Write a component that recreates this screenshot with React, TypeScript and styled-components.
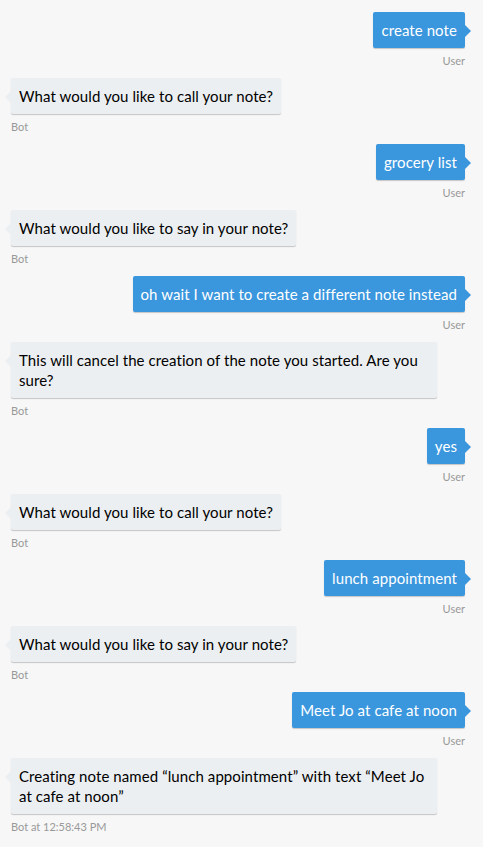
import React from "react";
import styled, { createGlobalStyle } from "styled-components";

const GlobalStyle = createGlobalStyle`
  html, body {
    margin: 0;
    padding: 0;
    background: #f7f7f7;
  }
  body {
    font-family: Lato, "Open Sans", "Liberation Sans", sans-serif;
    -webkit-font-smoothing: antialiased;
  }
`;

type From = "user" | "bot";

const Chat = styled.div`
  display: flex;
  flex-direction: column;
  padding: 12px 18px 0 11px;
  min-height: 847px;
  box-sizing: border-box;
  background: #f7f7f7;
`;

const MessageGroup = styled.div<{ $from: From }>`
  display: flex;
  flex-direction: column;
  align-items: ${(p) => (p.$from === "user" ? "flex-end" : "flex-start")};
  margin-bottom: 9px;
`;

const Bubble = styled.div<{ $from: From }>`
  position: relative;
  max-width: 410px;
  padding: 8px;
  border-radius: 2px;
  font-size: 15px;
  line-height: 20px;
  letter-spacing: 0.08px;
  background: ${(p) => (p.$from === "user" ? "#3a96dd" : "#eceff1")};
  color: ${(p) => (p.$from === "user" ? "#ffffff" : "#000000")};
  box-shadow: 0 1px 1px 0 rgba(0, 0, 0, 0.2);
`;

const Callout = styled.svg<{ $from: From }>`
  position: absolute;
  top: 13px;
  width: 6px;
  height: 12px;
  ${(p) => (p.$from === "user" ? "right: -6px;" : "left: -6px;")}
  fill: ${(p) => (p.$from === "user" ? "#3a96dd" : "#eceff1")};
`;

const FromLabel = styled.div`
  margin-top: 5px;
  font-size: 11px;
  line-height: 16px;
  color: #999999;
`;

type Msg = { from: From; text: string; label?: string };

const messages: Msg[] = [
  { from: "user", text: "create note" },
  { from: "bot", text: "What would you like to call your note?" },
  { from: "user", text: "grocery list" },
  { from: "bot", text: "What would you like to say in your note?" },
  { from: "user", text: "oh wait I want to create a different note instead" },
  {
    from: "bot",
    text: "This will cancel the creation of the note you started. Are you sure?",
  },
  { from: "user", text: "yes" },
  { from: "bot", text: "What would you like to call your note?" },
  { from: "user", text: "lunch appointment" },
  { from: "bot", text: "What would you like to say in your note?" },
  { from: "user", text: "Meet Jo at cafe at noon" },
  {
    from: "bot",
    text: "Creating note named \u201Clunch appointment\u201D with text \u201CMeet Jo at cafe at noon\u201D",
    label: "Bot at 12:58:43 PM",
  },
];

function Message({ msg }: { msg: Msg }) {
  return (
    <MessageGroup $from={msg.from}>
      <Bubble $from={msg.from}>
        <Callout $from={msg.from} viewBox="0 0 6 12">
          {msg.from === "user" ? (
            <path d="M6 6 L0 12 V0 Z" />
          ) : (
            <path d="M0 6 L6 12 V0 Z" />
          )}
        </Callout>
        {msg.text}
      </Bubble>
      <FromLabel>{msg.label ?? (msg.from === "user" ? "User" : "Bot")}</FromLabel>
    </MessageGroup>
  );
}

export default function App() {
  return (
    <>
      <GlobalStyle />
      <Chat>
        {messages.map((m, i) => (
          <Message key={i} msg={m} />
        ))}
      </Chat>
    </>
  );
}
